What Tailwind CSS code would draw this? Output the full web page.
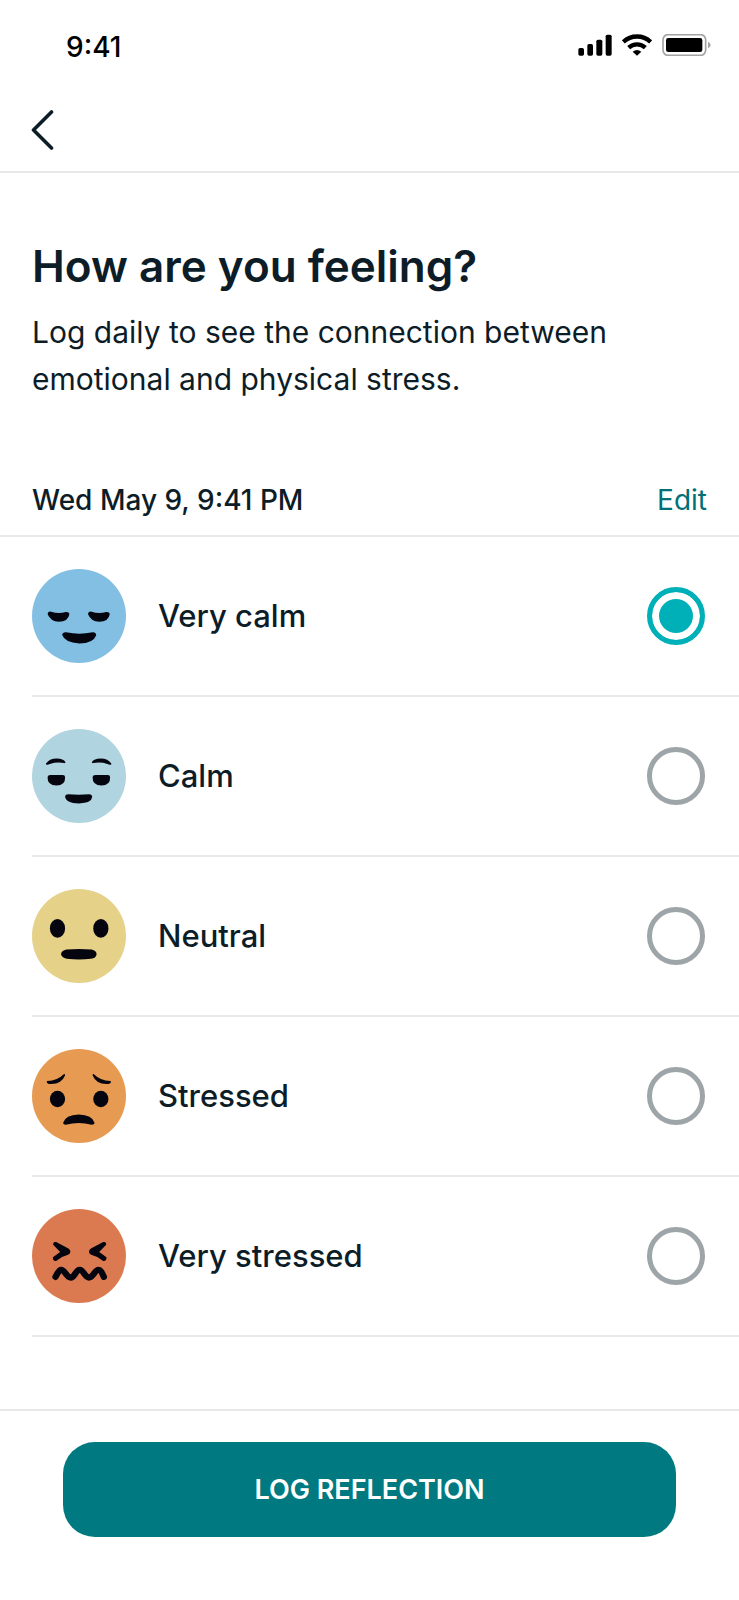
<!DOCTYPE html>
<html lang="en">
<head>
  <meta charset="UTF-8">
  <meta name="viewport" content="width=device-width, initial-scale=1">
  <title>How are you feeling?</title>
  <script src="https://cdn.jsdelivr.net/npm/@tailwindcss/browser@4"></script>
</head>
<body class="min-h-screen flex flex-col bg-white text-[#0d1d27] font-['Inter','Liberation_Sans',sans-serif]">

  <!-- Status bar -->
  <div class="flex items-center justify-between h-[90px] pl-[66px] pr-7 text-black">
    <span class="pt-1 text-[28px] leading-10 font-medium">9:41</span>
    <div class="flex items-center gap-[10px]">
      <!-- Signal -->
      <svg class="w-[34px] h-[22px]" viewBox="56 42 102 66" fill="currentColor" aria-hidden="true">
        <rect x="57" y="84" width="17" height="23" rx="5"/>
        <rect x="84" y="72" width="17" height="35" rx="5"/>
        <rect x="111" y="59" width="18" height="48" rx="5"/>
        <rect x="139" y="44" width="18" height="63" rx="5"/>
      </svg>
      <!-- Wifi -->
      <svg class="w-[30px] h-[22px]" viewBox="187 42 90 66" fill="none" stroke="currentColor" stroke-width="13" aria-hidden="true">
        <path d="M191 66a59 59 0 0 1 82 0"/>
        <path d="M207 83a37 37 0 0 1 50 0"/>
        <path d="M219 95q13-10 26 0l-13 12z" fill="currentColor" stroke="none"/>
      </svg>
      <!-- Battery -->
      <svg class="w-[49px] h-[22px]" viewBox="305 42 147 66" fill="none" aria-hidden="true">
        <rect x="308" y="44" width="128" height="62" rx="15" stroke="#a3a3a3" stroke-width="5"/>
        <rect x="317" y="54" width="109" height="42" rx="7" fill="currentColor"/>
        <path d="M443 65q8 4 8 10t-8 10z" fill="#a3a3a3"/>
      </svg>
    </div>
  </div>

  <!-- Nav -->
  <header class="flex items-start h-[83px] px-[31px] pt-5 border-b-2 border-[#e8e8e8]">
    <button type="button" class="block" aria-label="Back">
      <svg class="w-[23px] h-10" viewBox="0 0 23 40" fill="none" stroke="currentColor" stroke-width="3.6"
           stroke-linecap="round" stroke-linejoin="round">
        <path d="M20.5 2L2.5 20l18 18"/>
      </svg>
    </button>
  </header>

  <main>
    <div class="px-8 pt-[65px]">
      <h1 class="text-[44px] leading-14 font-semibold">How are you feeling?</h1>
      <p class="mt-[15px] text-[30px] leading-[47px]">Log daily to see the connection between emotional and physical stress.</p>
    </div>

    <!-- Date -->
    <div class="flex items-center justify-between mt-[77px] px-8 pb-[15px] border-b-2 border-[#e8e8e8] text-[28px] leading-10">
      <h2 class="font-medium">Wed May 9, 9:41 PM</h2>
      <a href="#" class="text-[#006f78]">Edit</a>
    </div>

    <!-- Moods -->
    <form id="moodForm" class="pl-8 text-[31px] font-medium">
      <label class="flex items-center gap-8 h-40 pr-[34px] border-b-2 border-[#e8e8e8]">
        <svg class="w-[94px] h-[94px]" viewBox="35 27 284 284" fill="#05050f" aria-hidden="true">
          <circle cx="177" cy="169" r="142" fill="#82bfe3"/>
          <path d="M82 163q2-9 11-7 22 8 44 1 10-1 11 6-3 23-32 23-25 0-34-23z"/>
          <path d="M204 163q2-9 11-7 22 8 44 1 10-1 11 6-3 23-32 23-25 0-34-23z"/>
          <path d="M126 226q2-9 12-8 40 9 80 0 10-1 11 9-8 24-51 25-44-2-52-26z"/>
        </svg>
        <span class="flex-1">Very calm</span>
        <input type="radio" name="mood" value="very-calm" checked
               class="appearance-none size-[58px] rounded-full border-5 border-[#9ea5a9] checked:border-[#00b0b9] checked:bg-[#00b0b9] checked:shadow-[inset_0_0_0_7px_white]">
      </label>
      <label class="flex items-center gap-8 h-40 pr-[34px] border-b-2 border-[#e8e8e8]">
        <svg class="w-[94px] h-[94px]" viewBox="35 27 284 284" fill="#05050f" aria-hidden="true">
          <circle cx="177" cy="169" r="142" fill="#b0d4e0"/>
          <path d="M77 132q10-16 33-16 20 0 26 11 0 4-4 3-24-5-50 5-5 1-5-3z"/>
          <path d="M275 132q-10-16-33-16-20 0-26 11 0 4 4 3 24-5 50 5 5 1 5-3z"/>
          <path d="M82 172q1-6 8-6h38q7 0 7 7 1 25-26 25-28-1-27-26z"/>
          <path d="M218 172q1-6 8-6h38q7 0 7 7 1 25-26 25-28-1-27-26z"/>
          <path d="M135 230q1-6 9-6 32 3 64 0 8 0 9 8-2 19-40 20-41-1-42-22z"/>
        </svg>
        <span class="flex-1">Calm</span>
        <input type="radio" name="mood" value="calm"
               class="appearance-none size-[58px] rounded-full border-5 border-[#9ea5a9] checked:border-[#00b0b9] checked:bg-[#00b0b9] checked:shadow-[inset_0_0_0_7px_white]">
      </label>
      <label class="flex items-center gap-8 h-40 pr-[34px] border-b-2 border-[#e8e8e8]">
        <svg class="w-[94px] h-[94px]" viewBox="35 25 284 284" fill="#05050f" aria-hidden="true">
          <circle cx="177" cy="167" r="142" fill="#e6d188"/>
          <ellipse cx="112" cy="144" rx="23" ry="28"/>
          <ellipse cx="243" cy="144" rx="23" ry="28"/>
          <path d="M123 222q0-11 16-14 38-3 76 0 15 3 15 14-1 11-17 14-35 4-73 0-16-4-17-14z"/>
        </svg>
        <span class="flex-1">Neutral</span>
        <input type="radio" name="mood" value="neutral"
               class="appearance-none size-[58px] rounded-full border-5 border-[#9ea5a9] checked:border-[#00b0b9] checked:bg-[#00b0b9] checked:shadow-[inset_0_0_0_7px_white]">
      </label>
      <label class="flex items-center gap-8 h-40 pr-[34px] border-b-2 border-[#e8e8e8]">
        <svg class="w-[94px] h-[94px]" viewBox="35 24 284 284" fill="#05050f" aria-hidden="true">
          <circle cx="177" cy="166" r="142" fill="#e79a51"/>
          <path d="M81 121q31-2 50-21 4-1 4 3-10 26-42 27-11 0-13-5-1-4 1-4z"/>
          <path d="M272 121q-31-2-50-21-4-1-4 3 10 26 42 27 11 0 13-5 1-4-1-4z"/>
          <ellipse cx="112" cy="175" rx="23" ry="25"/>
          <ellipse cx="243" cy="175" rx="23" ry="25"/>
          <path d="M129 247q7-24 47-25 41 1 48 25 0 6-9 6-38-11-78 0-8 0-8-6z"/>
        </svg>
        <span class="flex-1">Stressed</span>
        <input type="radio" name="mood" value="stressed"
               class="appearance-none size-[58px] rounded-full border-5 border-[#9ea5a9] checked:border-[#00b0b9] checked:bg-[#00b0b9] checked:shadow-[inset_0_0_0_7px_white]">
      </label>
      <label class="flex items-center gap-8 h-40 pr-[34px] border-b-2 border-[#e8e8e8]">
        <svg class="w-[94px] h-[94px]" viewBox="35 23 284 284" fill="#05050f" aria-hidden="true">
          <circle cx="177" cy="165" r="142" fill="#db7a50"/>
          <path d="M99 131q-1-10 9-8l37 19q6 4 6 10t-7 9q-18 4-36 19-11 1-10-11l22-16z"/>
          <path d="M259 131q1-10-9-8l-37 19q-6 4-6 10t7 9q18 4 36 19 11 1 10-11l-22-16z"/>
          <path d="M106 228C112 217 116 207 123 207C134 207 140 230 152 230C164 230 167 207 179 207C191 207 195 230 207 230C219 230 225 207 236 207C243 207 247 217 252 228"
                fill="none" stroke="#05050f" stroke-width="19" stroke-linecap="round"/>
        </svg>
        <span class="flex-1">Very stressed</span>
        <input type="radio" name="mood" value="very-stressed"
               class="appearance-none size-[58px] rounded-full border-5 border-[#9ea5a9] checked:border-[#00b0b9] checked:bg-[#00b0b9] checked:shadow-[inset_0_0_0_7px_white]">
      </label>
    </form>
  </main>

  <!-- Footer -->
  <footer class="mt-auto px-[63px] pt-[31px] pb-[63px] border-t-2 border-[#e8e8e8]">
    <button type="submit" form="moodForm"
            class="block w-full h-[95px] rounded-[32px] bg-[#007a80] text-white text-[27px] leading-10 font-semibold">
      LOG REFLECTION
    </button>
  </footer>

</body>
</html>
